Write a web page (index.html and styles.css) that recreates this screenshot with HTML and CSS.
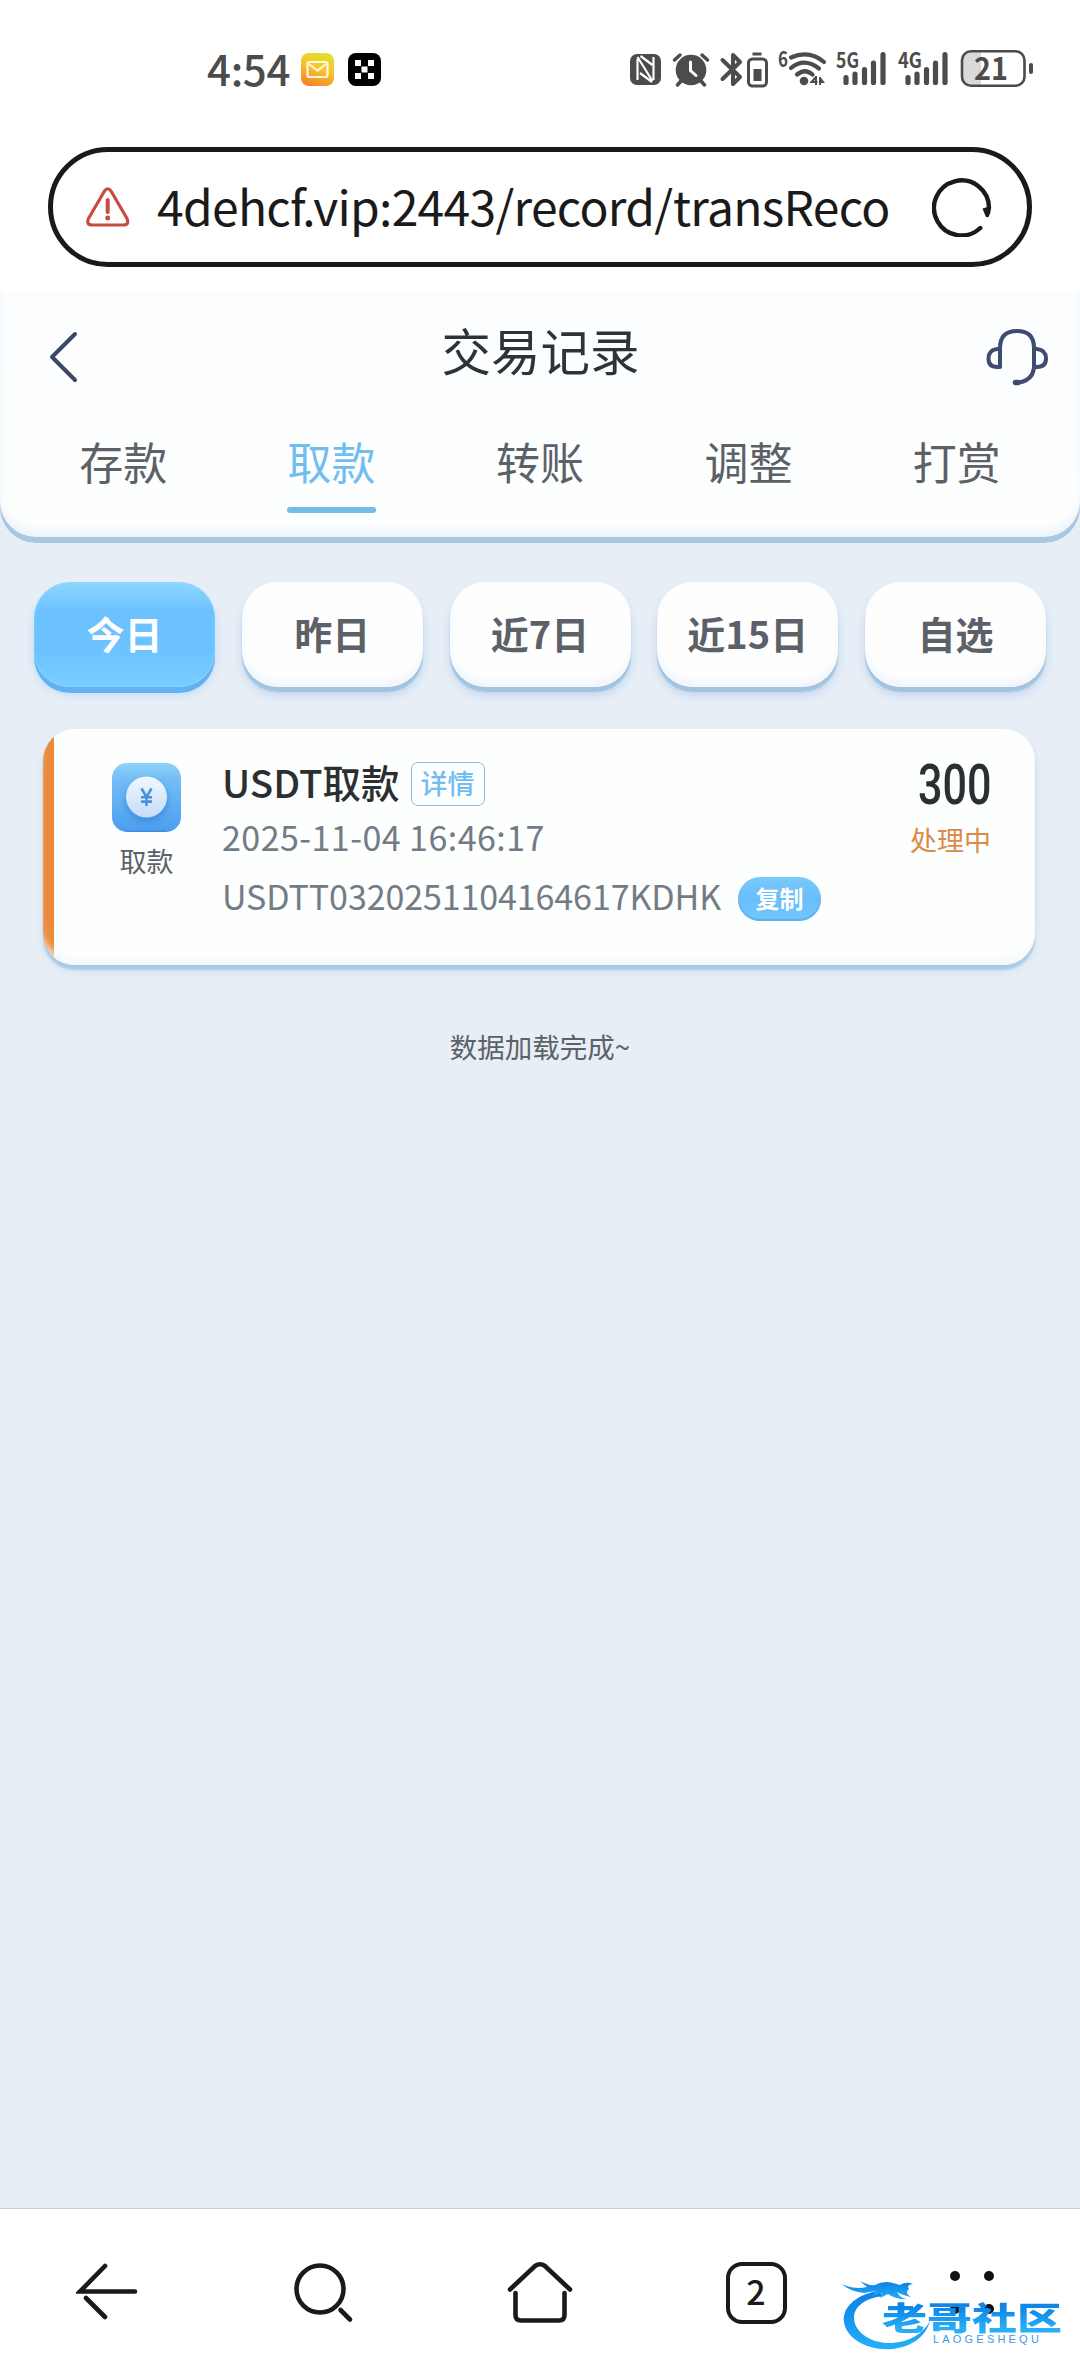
FILE: index.html
```html
<!DOCTYPE html>
<html lang="zh-CN">
<head>
<meta charset="utf-8">
<title>交易记录</title>
<link rel="stylesheet" href="styles.css">
</head>
<body>
<div class="screen">
  <div class="status">
    <span class="clock">4:54</span>
    <svg class="app-mail" width="33" height="33" viewBox="0 0 33 33"><defs><linearGradient id="mail" x1=".7" y1="0" x2=".35" y2="1"><stop offset="0" stop-color="#dfe22a"/><stop offset=".5" stop-color="#f6c12e"/><stop offset="1" stop-color="#f5842a"/></linearGradient></defs><rect width="33" height="33" rx="8" fill="url(#mail)"/><rect x="6.5" y="9" width="20" height="15" rx="2" fill="none" stroke="#fff8d8" stroke-width="2.2"/><path d="M8 11l8.500 6.500L25 11" fill="none" stroke="#fff8d8" stroke-width="2.2"/></svg>
    <svg class="app-grid" width="33" height="33" viewBox="0 0 33 33"><rect width="33" height="33" rx="8"/><path d="M7 7h6v6H7zM20 7h6v6h-6zM13.500 13.500h6v6h-6zM7 20h6v6H7zM20 20h6v6h-6z" fill="#fff"/></svg>
    <svg class="sys" width="410" height="60" viewBox="626 38 410 60" fill="none" stroke="#4c4c4c" stroke-linecap="round">
      <rect x="630" y="54" width="31" height="31" rx="7" fill="#4c4c4c" stroke="none"/>
      <path d="M637.500 80V59M637.500 57l15 24M653.500 57v23M640.500 56l12 9M640 73l12 9" stroke="#fff" stroke-width="2.200" stroke-linecap="butt"/>
      <circle cx="691" cy="70" r="15.300" fill="#4c4c4c" stroke="none"/>
      <path d="M674.500 60l5.500-5M707.500 60l-5.500-5M681 81l-3.500 4M701 81l3.500 4" stroke-width="3.500"/>
      <path d="M690.500 62v8.500l5.500 5" stroke="#fff" stroke-width="3"/>
      <path d="M722.500 60l17.500 17-7 7V55l7 7-17.500 17" stroke-width="4" stroke-linejoin="round"/>
      <path d="M752.500 54h9" stroke-width="3" stroke-linecap="butt"/>
      <rect x="748.500" y="59" width="18" height="27" rx="4" stroke-width="3"/>
      <rect x="753.500" y="69" width="8" height="12" fill="#4c4c4c" stroke="none"/>
      <path d="M791 57.500q18-8 33 4.500M791 68q13-11 28 .500M797 74.500q8-6.500 15.500 0" stroke-width="4.200"/>
      <circle cx="804" cy="81" r="4.300" fill="#4c4c4c" stroke="none"/>
      <path d="M816 76v9M816 77l-4.500 5h6M820 77v8M820 78l3 4h-3" stroke-width="2" stroke-linecap="butt"/>
      <path d="M846 77.500v5M855 74v8.500M864.500 69.500v13M873.500 63v19.500M883 54.500v28" stroke-width="5.200"/>
      <path d="M908 77.500v5M917 74v8.500M926.500 69.500v13M935.500 63v19.500M945 54.500v28" stroke-width="5.200"/>
      <clipPath id="cell"><rect x="962" y="51" width="62" height="35" rx="9"/></clipPath>
      <rect x="961" y="50" width="20" height="37" fill="#d9d9d9" stroke="none" clip-path="url(#cell)"/>
      <rect x="962" y="51.300" width="62.500" height="34.500" rx="9" stroke-width="2.600"/>
      <path d="M1031 65v7" stroke-width="4"/>
      <g fill="#4c4c4c" stroke="none" class="sys-text">
        <text x="778" y="66.500" font-size="21" textLength="10" lengthAdjust="spacingAndGlyphs">6</text>
        <text x="836" y="67.500" font-size="21" textLength="23" lengthAdjust="spacingAndGlyphs">5G</text>
        <text x="898" y="67.500" font-size="21" textLength="24" lengthAdjust="spacingAndGlyphs">4G</text>
        <text x="974" y="79.500" font-size="31" textLength="34" lengthAdjust="spacingAndGlyphs">21</text>
      </g>
    </svg>
  </div>

  <div class="address">
    <svg width="44" height="40" viewBox="0 0 44 40" fill="none" stroke="#c94a41" stroke-width="3.200" stroke-linejoin="round" stroke-linecap="round"><path d="M18.500 4Q21.700-.500 25 4L41 31.500Q43.500 38 37.500 38H6Q0 38 2.500 31.500Z"/><path d="M21.700 13v12" stroke-width="4"/><path d="M21.700 31v.2" stroke-width="4.800"/></svg>
    <span class="url">4dehcf.vip:2443/record/transReco</span>
    <svg class="reload" width="60" height="60" viewBox="0 0 60 60"><path d="M48.300 51A27.500 27.500 0 1 1 57 31" fill="none" stroke="#1a1a1a" stroke-width="4.400" stroke-linecap="round"/><path d="M50.500 31.500l8-2.500q1 6-2 11-2 1-3-1z" fill="#1a1a1a"/></svg>
  </div>

  <main class="page">
    <header class="head">
      <div class="titlebar">
        <svg class="back" width="32" height="54" viewBox="0 0 32 54" fill="none" stroke="#3b4766" stroke-width="4" stroke-linecap="round" stroke-linejoin="round"><path d="M28 4L5 27l23 23"/></svg>
        <h1 class="title">交易记录</h1>
        <svg class="service" width="64" height="58" viewBox="0 0 64 58" fill="none" stroke="#3f4b70" stroke-width="4" stroke-linecap="round" stroke-linejoin="round"><path d="M15 39V20Q15 3 32 3t17 17v19M15 21H12Q3.500 22 3.500 30.500T12 39h3M49 21h3q9 1 9 9.500T52 39h-3q-1 13-15 15.500h-4"/><path d="M30.500 54.500h2.500" stroke-width="5.500"/></svg>
      </div>
      <nav class="tabs">
        <span class="tab">存款</span><span class="tab tab-on">取款</span><span class="tab">转账</span><span class="tab">调整</span><span class="tab">打赏</span>
      </nav>
    </header>

    <div class="filters">
      <span class="chip chip-on">今日</span><span class="chip">昨日</span><span class="chip">近7日</span><span class="chip">近15日</span><span class="chip">自选</span>
    </div>

    <section class="card">
      <div class="kind">
        <svg width="69" height="69" viewBox="0 0 69 69"><defs><linearGradient id="tile" x1="0" y1="0" x2="0" y2="1"><stop offset="0" stop-color="#8fd2fa"/><stop offset=".25" stop-color="#72bcf6"/><stop offset=".97" stop-color="#4e9ff0"/><stop offset="1" stop-color="#3984d8"/></linearGradient><linearGradient id="coin" x1="0" y1="0" x2="0" y2="1"><stop offset="0" stop-color="#f3f8ff"/><stop offset="1" stop-color="#c5dcf8"/></linearGradient><filter id="soft" x="-50%" y="-50%" width="200%" height="200%"><feGaussianBlur stdDeviation="3"/></filter></defs><rect width="69" height="69" rx="15" fill="url(#tile)"/><circle cx="34.500" cy="38" r="21" fill="#2d7fd0" opacity=".55" filter="url(#soft)"/><circle cx="34.500" cy="34" r="20.500" fill="url(#coin)"/><path d="M29.500 25.500l5 8.500 5-8.500M34.500 34v9M29 34.200h11M29 38.600h11" fill="none" stroke="#4893d8" stroke-width="2.600"/></svg>
        <span class="kind-name">取款</span>
      </div>
      <div class="info">
        <div class="line line-name"><span class="name">USDT取款</span><span class="tag">详情</span></div>
        <div class="line line-date"><span class="date">2025-11-04 16:46:17</span></div>
        <div class="line line-id"><span class="order">USDTT0320251104164617KDHK</span><span class="copy">复制</span></div>
      </div>
      <div class="result">
        <span class="amount">300</span>
        <span class="state">处理中</span>
      </div>
    </section>

    <p class="done">数据加载完成~</p>
  </main>

  <footer class="toolbar">
    <svg width="64" height="64" viewBox="0 0 64 64"><path d="M29 5L4 30.500H59M10 37L29 56"/></svg>
    <svg width="64" height="64" viewBox="0 0 64 64"><circle cx="28" cy="28" r="23.500"/><path d="M48.500 49l9.500 9.500"/></svg>
    <svg width="68" height="64" viewBox="0 0 68 64"><path d="M4 28.500L29 5Q34 1.500 39 5L64 28.500M9.500 32V54q0 5.500 5.500 5.500H53q5.500 0 5.500-5.500V32"/></svg>
    <span class="count">2</span>
    <span class="more"><i class="dot"></i><i class="dot"></i><i class="dot"></i><i class="dot"></i></span>
  </footer>

  <div class="mark">
    <svg width="96" height="76" viewBox="0 0 96 76"><defs><linearGradient id="ring" x1="0" y1="0" x2="0" y2="1"><stop offset="0" stop-color="#0b7fe6"/><stop offset="1" stop-color="#24b0f7"/></linearGradient></defs><g fill="url(#ring)"><path d="M38 15C14 19 2 33 4 46C6 62 27 75 52 73C72 71 86 60 90 45C83 58 69 66 52 67C30 68 14 55 14 42C14 31 24 22 44 20Z"/><path d="M2 8Q14 14 27 11L20 5Q29 10 35 9Q44 4 53 7L60 9Q66 5 73 8Q66 9 69 13Q64 17 71 21Q62 19 57 16Q60 22 67 23Q56 24 48 18L40 22 42 17 32 20 36 15 24 17Q9 15 2 8Z"/></g></svg>
    <span class="mark-name">老哥社区</span>
    <span class="mark-sub">LAOGESHEQU</span>
  </div>
</div>
</body>
</html>
```
FILE: styles.css
```css
* { box-sizing: border-box; }
body {
  margin: 0;
  background: #fff;
  color: #5c6167;
  font-family: "Noto Sans CJK SC", sans-serif;
}
svg { display: block; flex: none; }
.screen {
  position: relative;
  display: flex;
  flex-direction: column;
  width: 1080px;
  height: 2376px;
  overflow: hidden;
}

.status {
  display: flex;
  align-items: center;
  height: 147px;
  padding: 0 44px 8px 207px;
}
.clock {
  width: 94px;
  padding-bottom: 4px;
  color: #4c4c4c;
  font-size: 42px;
  font-weight: 500;
  letter-spacing: -.3px;
  line-height: 44px;
}
.app-mail { margin-right: 14px; }
.sys { margin: -3px 0 0 auto; overflow: visible; }
.sys-text { font-family: "Noto Sans CJK SC", sans-serif; font-weight: 600; }

.address {
  display: flex;
  align-items: center;
  height: 120px;
  margin: 0 48px;
  padding: 0 35px 0 33px;
  border: 5px solid #1a1a1a;
  border-radius: 60px;
}
.url {
  flex: 1;
  width: 0;
  margin-left: 27px;
  padding-bottom: 4px;
  color: #1a1a1a;
  font-size: 48px;
  letter-spacing: -.7px;
  line-height: 60px;
  white-space: nowrap;
}

.page {
  flex: 1;
  margin-top: 24px;
  background: #e7eef6;
}
.head {
  height: 252px;
  border-radius: 0 0 36px 36px;
  background: linear-gradient(#fcfdfe, #fdfefe);
  box-shadow: inset 0 -6px 0 #a9c7e0, inset 0 -14px 12px -4px #e6eff7;
}
.titlebar {
  display: flex;
  align-items: center;
  justify-content: space-between;
  height: 124px;
  padding: 8px 31px 0 47px;
}
.title {
  margin: 0 0 14px 17px;
  color: #2e3337;
  font-size: 49.500px;
  font-weight: 400;
  line-height: 60px;
}
.tabs {
  display: flex;
  padding: 13px 19px 0;
}
.tab {
  flex: 1;
  display: flex;
  flex-direction: column;
  align-items: center;
  font-size: 44px;
  line-height: 66px;
}
.tab-on { color: #72bdf0; }
.tab-on::after {
  width: 89px;
  height: 6px;
  margin-top: 13px;
  border-radius: 3px;
  background: #72bdea;
  content: "";
}

.filters {
  display: flex;
  justify-content: space-between;
  padding: 39px 34px 0;
}
.chip {
  width: 181px;
  height: 105px;
  border-radius: 36px;
  background: #fefefe;
  box-shadow: inset 0 -8px 8px -2px #f0f5fa, 0 5px 1px #a3c4e0, 0 8px 8px #bdd4eb;
  font-size: 38px;
  font-weight: 700;
  line-height: 101px;
  text-align: center;
}
.chip-on {
  background: linear-gradient(#8dd6ff, #6cc2ff 28%, #6cc2ff 65%, #78ceff);
  box-shadow: inset 0 0 2px #9bdcff, 0 6px 0 #62b2f3, 0 7px 8px #b7d8f5;
  color: #fff;
}

.card {
  display: flex;
  width: 992px;
  height: 236px;
  margin: 42px 0 0 43px;
  padding-right: 44px;
  border-radius: 32px;
  background: linear-gradient(90deg, #ea8b3b 11px, #fdfefe 11px);
  box-shadow: inset 0 -10px 8px -5px #f3f7fb, 0 5px 2px #abcbe5, 0 6px 8px #d0e0f0;
}
.kind {
  display: flex;
  flex-direction: column;
  align-items: center;
  width: 207px;
  padding-top: 34px;
}
.kind-name {
  margin-top: 9px;
  font-size: 27px;
  line-height: 40px;
}
.info { flex: 1; margin-left: -28px; padding-top: 26px; }
.line { display: flex; align-items: center; white-space: nowrap; }
.line-name { height: 52px; }
.line-date { height: 59px; }
.line-id { height: 59px; }
.name {
  color: #2c2f32;
  font-size: 38.500px;
  font-weight: 500;
  line-height: 50px;
}
.tag {
  width: 74px;
  height: 44px;
  margin: 5px 0 0 11px;
  border: 1.500px solid #8cbfe0;
  border-radius: 7px;
  color: #72bdf0;
  font-size: 27px;
  font-weight: 500;
  line-height: 39px;
  text-align: center;
}
.date, .order { color: #737b84; font-size: 34px; line-height: 50px; }
.date { letter-spacing: .45px; }
.order { letter-spacing: -.1px; }
.copy {
  width: 83px;
  height: 44px;
  margin: 6px 0 0 17px;
  border-radius: 22px;
  background: linear-gradient(#79c9fc, #69bdfb 50%, #72c8fd);
  box-shadow: inset 0 -2px 1px #5eaeea;
  color: #fff;
  font-size: 24px;
  font-weight: 700;
  line-height: 42px;
  text-align: center;
}
.result {
  display: flex;
  flex-direction: column;
  align-items: flex-end;
  padding-top: 28px;
}
.amount {
  color: #2c2f32;
  font-family: "Roboto", sans-serif;
  font-size: 56px;
  font-weight: 500;
  line-height: 56px;
  transform: scaleX(.77);
  transform-origin: right;
}
.state {
  margin-top: 7px;
  color: #d98a45;
  font-size: 27px;
  line-height: 40px;
}
.done {
  margin: 61px 0 0;
  font-size: 27.500px;
  line-height: 40px;
  text-align: center;
}

.toolbar {
  display: grid;
  grid-template-columns: repeat(5, 216px);
  align-items: center;
  justify-items: center;
  height: 168px;
  border-top: 1px solid #c9cdd4;
  background: #fff;
  fill: none;
  stroke: #1a1a1a;
  stroke-width: 4.600;
  stroke-linecap: round;
}
.count {
  width: 61px;
  height: 62px;
  border: 4.500px solid #1a1a1a;
  border-radius: 16px;
  color: #1a1a1a;
  font-size: 34px;
  font-weight: 500;
  line-height: 50px;
  text-align: center;
}
.more {
  display: grid;
  grid-template-columns: 10px 10px;
  gap: 23px 24px;
}
.dot { width: 10px; height: 10px; border-radius: 50%; background: #111; }

.mark {
  position: absolute;
  left: 840px;
  top: 2276px;
  width: 230px;
  height: 80px;
}
.mark-name {
  position: absolute;
  left: 42px;
  top: 10px;
  background: linear-gradient(#0f86e8 30%, #27aef7 75%);
  background-clip: text;
  color: transparent;
  font-size: 45px;
  font-weight: 900;
  line-height: 62px;
  white-space: nowrap;
  transform: scaleY(.7);
}
.mark-sub {
  position: absolute;
  left: 93px;
  top: 55px;
  color: #3b9be6;
  font-family: "Liberation Sans", sans-serif;
  font-size: 11px;
  letter-spacing: 3.200px;
  line-height: 16px;
}
```
